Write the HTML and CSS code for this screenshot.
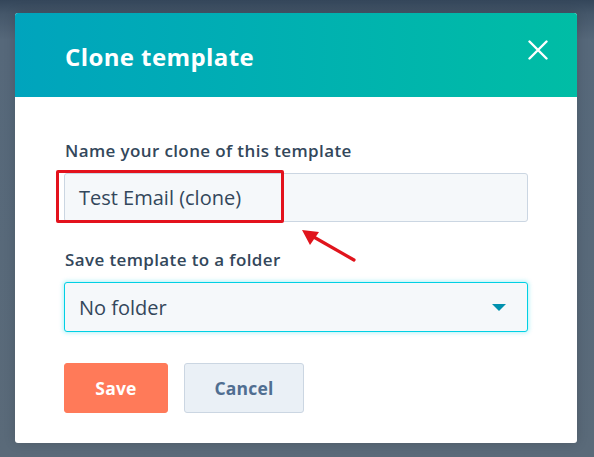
FILE: index.html
```html
<!DOCTYPE html>
<html lang="en">
<head>
<meta charset="utf-8">
<title>Clone template</title>
<link rel="stylesheet" href="styles.css">
</head>
<body>
<div class="backdrop">
  <div class="modal">
    <div class="modal-header">
      <h1 class="modal-title">Clone template</h1>
      <button class="close-btn" aria-label="Close">
        <svg width="20" height="20" viewBox="0 0 20 20"><path d="M1.5 1.5 L18.5 18.5 M18.5 1.5 L1.5 18.5" stroke="#fff" stroke-width="2.4" stroke-linecap="round" fill="none"/></svg>
      </button>
    </div>
    <div class="modal-body">
      <div class="field">
        <label class="field-label">Name your clone of this template</label>
        <div class="input-wrap">
          <div class="text-input">Test Email (clone)</div>
          <div class="highlight-box"></div>
          <svg class="annot-arrow" width="64" height="40" viewBox="0 0 64 40">
            <line x1="56" y1="34" x2="14" y2="10" stroke="#e0141c" stroke-width="3.2" stroke-linecap="round"/>
            <polygon points="4,4 21,6 12,19" fill="#e0141c"/>
          </svg>
        </div>
      </div>
      <div class="field">
        <label class="field-label">Save template to a folder</label>
        <div class="select">
          <span>No folder</span>
          <svg class="caret" width="14" height="8" viewBox="0 0 14 8"><polygon points="0,0 14,0 7,7" fill="#0091ae"/></svg>
        </div>
      </div>
      <div class="actions">
        <button class="btn btn-primary">Save</button>
        <button class="btn btn-secondary">Cancel</button>
      </div>
    </div>
  </div>
</div>
</body>
</html>
```

FILE: styles.css
```css
* { box-sizing: border-box; }
html, body { margin: 0; padding: 0; }
body {
  width: 594px;
  height: 457px;
  overflow: hidden;
  font-family: "Open Sans", "Lato", sans-serif;
  background: #5a6a79;
}
.backdrop {
  height: 457px;
  padding: 13px 17px 14px 15px;
  background: linear-gradient(to bottom, #34465a 0px, #45576a 14px, #56687a 40px, #5a6a79 100%);
}
.modal {
  background: #fff;
  border-radius: 3px;
  overflow: hidden;
  height: 430px;
  box-shadow: 0 0 12px rgba(0,0,0,0.15);
}
.modal-header {
  height: 84px;
  background: linear-gradient(to right, #00a4bd, #00bda5);
  display: flex;
  align-items: center;
  justify-content: space-between;
  padding: 0 29px 0 50px;
}
.modal-title {
  margin: 0;
  color: #fff;
  font-size: 24px;
  font-weight: 700;
  letter-spacing: 0.4px;
  line-height: 30px;
  padding-top: 3px;
}
.close-btn {
  background: none;
  border: 0;
  padding: 0;
  width: 20px;
  height: 20px;
  display: flex;
  margin-bottom: 10px;
}
.modal-body {
  padding: 44px 49px 0 49px;
}
.field { display: flex; flex-direction: column; }
.field + .field { margin-top: 28px; }
.field-label {
  color: #33475b;
  font-size: 17px;
  font-weight: 600;
  letter-spacing: 0.38px;
  line-height: 20px;
  margin-bottom: 12px;
  padding-left: 1px;
}
.input-wrap { position: relative; }
.text-input {
  height: 49px;
  background: #f5f8fa;
  border: 1px solid #cbd6e2;
  border-radius: 3px;
  display: flex;
  align-items: center;
  padding-left: 14px;
  color: #33475b;
  font-size: 20px;
}
.highlight-box {
  position: absolute;
  left: -8px;
  top: -3px;
  width: 228px;
  height: 53px;
  border: 3px solid #e3121c;
  border-radius: 2px;
}
.annot-arrow {
  position: absolute;
  left: 234px;
  top: 53px;
}
.select {
  height: 50px;
  background: #f5f8fa;
  border: 1px solid #00d0e4;
  border-radius: 3px;
  box-shadow: 0 0 4px 1px rgba(0, 208, 228, 0.3);
  display: flex;
  align-items: center;
  justify-content: space-between;
  padding: 0 21px 0 14px;
  color: #33475b;
  font-size: 20px;
}
.caret { margin-top: 1px; }
.actions {
  display: flex;
  gap: 15px;
  margin-top: 31px;
}
.btn {
  height: 50px;
  border-radius: 3px;
  font-family: "Open Sans", "Lato", sans-serif;
  font-size: 17.5px;
  font-weight: 700;
  letter-spacing: 0.2px;
}
.btn-primary {
  width: 104px;
  background: #ff7a59;
  border: 1px solid #ff7a59;
  color: #fff;
}
.btn-secondary {
  width: 120px;
  margin-left: 1px;
  background: #eaf0f6;
  border: 1px solid #cbd6e2;
  color: #506e91;
}
```
